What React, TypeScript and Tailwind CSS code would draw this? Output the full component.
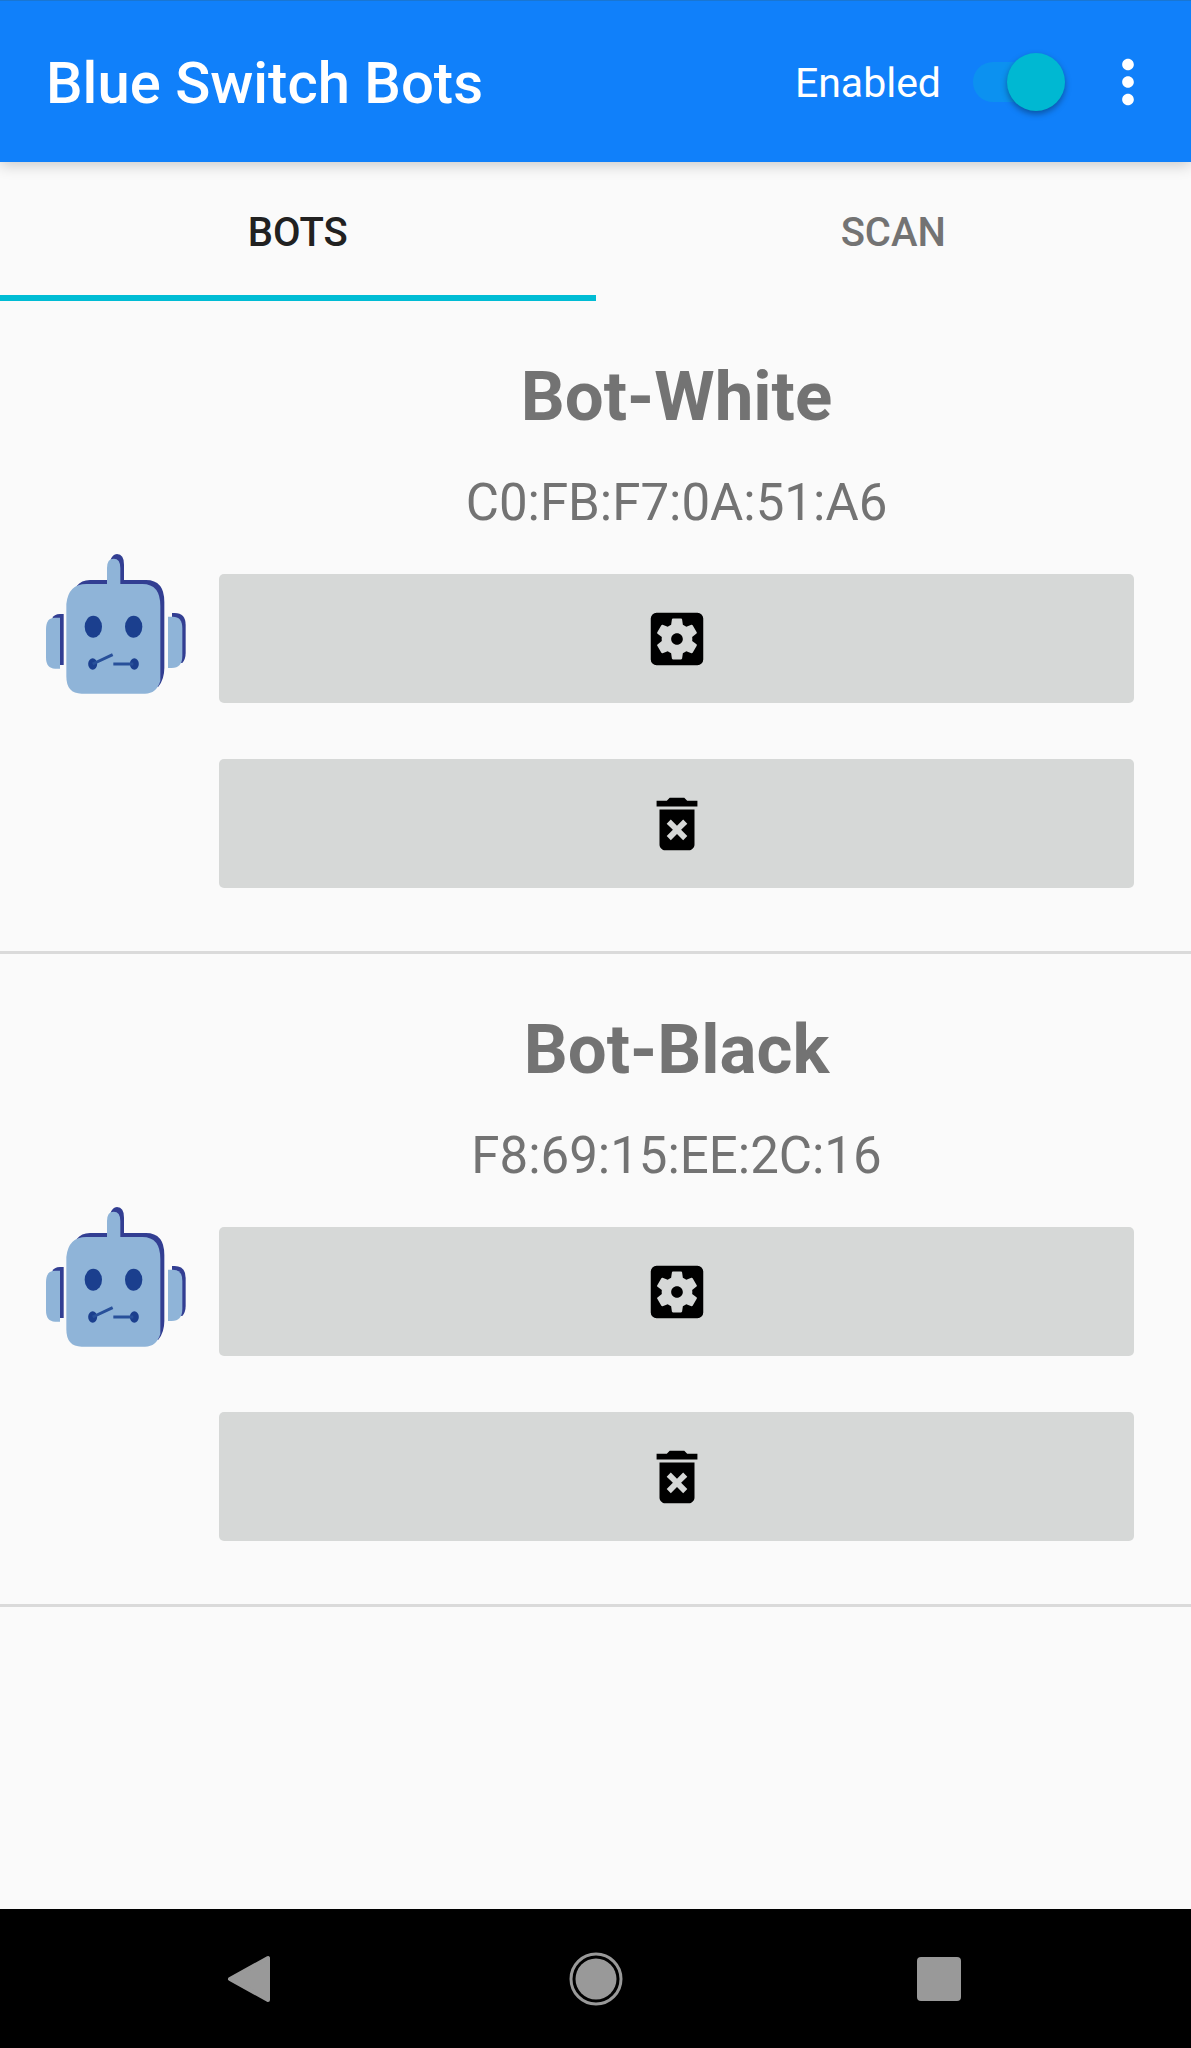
import { useState } from "react";
import { MdDeleteForever, MdMoreVert, MdSettingsApplications } from "react-icons/md";

type Bot = { name: string; address: string };

const bots: Bot[] = [
  { name: "Bot-White", address: "C0:FB:F7:0A:51:A6" },
  { name: "Bot-Black", address: "F8:69:15:EE:2C:16" },
];

function RobotIcon() {
  return (
    <svg viewBox="45 34 426 432" className="h-36 w-[142px] shrink-0" aria-hidden="true">
      <g fill="#323e92">
        <path d="M241 146V66q6-20 20-20 21 0 21 32v46h66q55 0 55 66v198q0 34-18 56H140V142q14-18 40-18h61z" />
        <path d="M66 240q6-14 24-14h11v153H88z" />
        <path d="M426 223h8q33 0 33 36v84q0 18-10 30l-31-3z" />
      </g>
      <g fill="#8fb4d8">
        <path d="M231 136V88q0-28 20-28t20 28v48h66q54 0 54 66v225q-12 38-46 38H155q-46 0-46-52V196q6-60 60-60z" />
        <path d="M90 237v153H75q-27 0-27-34v-85q0-34 27-34z" />
        <path d="M414 234h14q29 0 29 34v84q0 36-32 36h-11z" />
      </g>
      <g fill="#1b3f8e">
        <ellipse cx="190" cy="264" rx="26" ry="33" />
        <ellipse cx="311" cy="264" rx="26" ry="33" />
        <ellipse cx="188" cy="376" rx="13.500" ry="17" />
        <ellipse cx="313" cy="376" rx="13.500" ry="17" />
      </g>
      <path d="M188 376l60-28M250 376h60" fill="none" stroke="#28509a" strokeWidth="9" />
    </svg>
  );
}

function BotRow({ name, address }: Bot) {
  return (
    <li className="flex items-center gap-8 border-b-3 border-[#dadada] pt-[55px] pr-[57px] pb-[63px] pl-[45px]">
      <RobotIcon />
      <div className="flex min-w-0 flex-1 flex-col text-center text-[#737373]">
        <h2 className="text-[69px] leading-[82px] font-bold">{name}</h2>
        <p className="mt-[34px] text-[51px] leading-[62px]">{address}</p>
        <button
          type="button"
          aria-label={`Settings for ${name}`}
          className="mt-10 flex h-[129px] items-center justify-center rounded-[5px] bg-[#d6d8d7] text-black"
        >
          <MdSettingsApplications className="size-[70px]" />
        </button>
        <button
          type="button"
          aria-label={`Delete ${name}`}
          className="mt-14 flex h-[129px] items-center justify-center rounded-[5px] bg-[#d6d8d7] text-black"
        >
          <MdDeleteForever className="size-[70px]" />
        </button>
      </div>
    </li>
  );
}

export default function App() {
  const [enabled, setEnabled] = useState(true);
  const [tab, setTab] = useState("BOTS");

  return (
    <div className="flex min-h-screen flex-col bg-[#fafafa] font-[Roboto,sans-serif]">
      <header className="flex h-[162px] items-center border-t border-[#1976d2] bg-[#1080fa] pr-7 pl-[46px] text-white shadow-[0_3px_14px_rgba(0,0,0,0.2)]">
        <h1 className="flex-1 pt-0.5 text-[58px] leading-[68px] font-medium">Blue Switch Bots</h1>
        <label htmlFor="enabled" className="mr-8 pt-0.5 text-[41px] leading-12">
          Enabled
        </label>
        <input
          id="enabled"
          type="checkbox"
          role="switch"
          checked={enabled}
          onChange={(e) => setEnabled(e.target.checked)}
          className="relative h-10 w-[92px] appearance-none rounded-full bg-[#0c91f0] before:absolute before:-top-[9px] before:left-0 before:size-[58px] before:rounded-full before:bg-[#ececec] before:shadow-[0_3px_6px_rgba(0,0,0,0.35)] checked:before:left-[34px] checked:before:bg-[#00b8d2]"
        />
        <button type="button" aria-label="More options" className="ml-7">
          <MdMoreVert className="size-[70px]" />
        </button>
      </header>

      <div role="tablist" className="grid grid-cols-2">
        {["BOTS", "SCAN"].map((label) => (
          <button
            key={label}
            type="button"
            role="tab"
            aria-selected={tab === label}
            onClick={() => setTab(label)}
            className="h-[139px] border-b-6 border-transparent pt-2 text-[40px] font-medium text-[#737373] aria-selected:border-[#00bcd4] aria-selected:text-[#212121]"
          >
            {label}
          </button>
        ))}
      </div>

      <main className="flex-1">
        <ul>
          {bots.map((bot) => (
            <BotRow key={bot.address} {...bot} />
          ))}
        </ul>
      </main>

      <nav className="flex h-[139px] items-center justify-center bg-black text-[#999999]">
        <div className="grid w-full max-w-[1035px] grid-cols-3">
          <button type="button" aria-label="Back" className="flex justify-center">
            <svg viewBox="0 0 56 56" className="size-14" aria-hidden="true">
              <path d="M7 28L45 7v42z" fill="currentColor" stroke="currentColor" strokeWidth="4" strokeLinejoin="round" />
            </svg>
          </button>
          <button type="button" aria-label="Home" className="flex justify-center">
            <svg viewBox="0 0 56 56" className="size-14" aria-hidden="true">
              <circle cx="28" cy="28" r="20.500" fill="currentColor" />
              <circle cx="28" cy="28" r="25" fill="none" stroke="currentColor" strokeWidth="3" />
            </svg>
          </button>
          <button type="button" aria-label="Recent apps" className="flex justify-center">
            <svg viewBox="0 0 56 56" className="size-14" aria-hidden="true">
              <rect x="4" y="6" width="44" height="44" rx="4" fill="currentColor" />
            </svg>
          </button>
        </div>
      </nav>
    </div>
  );
}
